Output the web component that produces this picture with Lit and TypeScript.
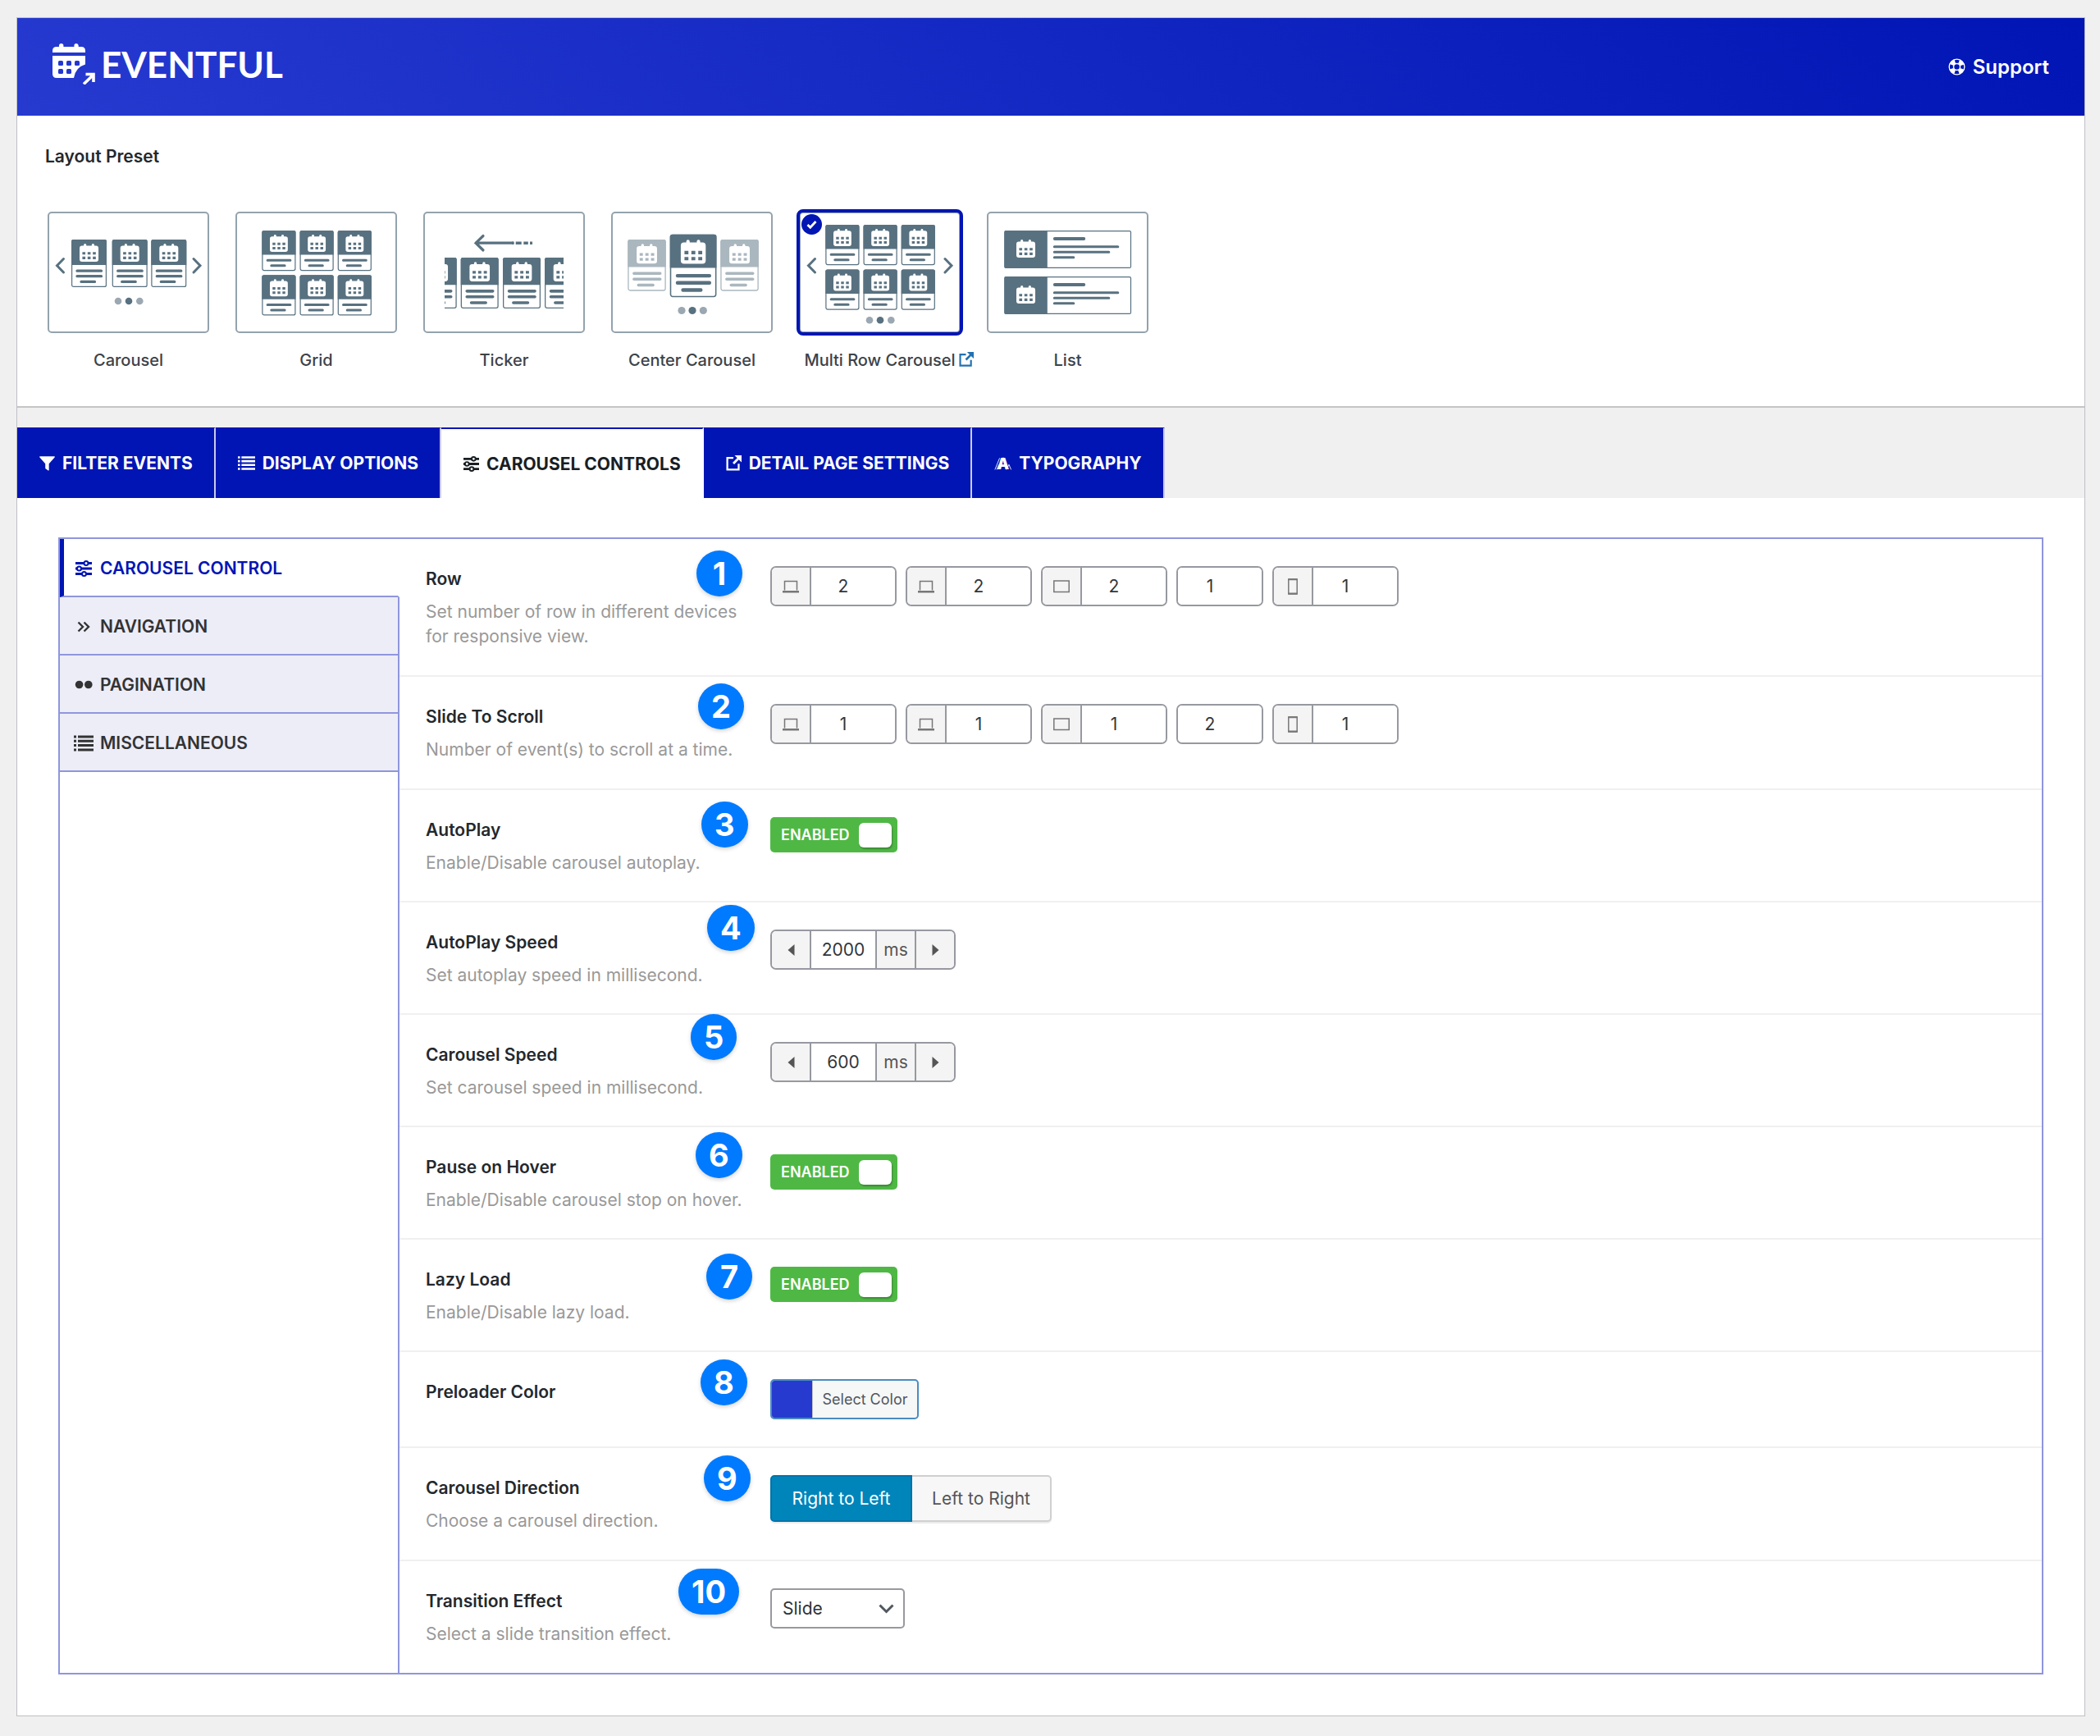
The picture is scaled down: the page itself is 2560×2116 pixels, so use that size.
import { LitElement, html, svg, css, nothing, TemplateResult, SVGTemplateResult } from "lit";
import { customElement, state } from "lit/decorators.js";
import { classMap } from "lit/directives/class-map.js";

/* ---------- line icons ---------- */

const sliders = html`<svg class="icon" viewBox="0 0 20 20" aria-hidden="true">
  <g fill="none" stroke="currentColor" stroke-width="2">
    <path d="M0 3.500h10.500M15.500 3.500H20M0 10h2M7 10h13M0 16.500h8M13 16.500h7" stroke-width="3" />
    <circle cx="13" cy="3.500" r="2.500" /><circle cx="4.500" cy="10" r="2.500" /><circle cx="10.500" cy="16.500" r="2.500" />
  </g></svg>`;
const funnel = html`<svg class="icon" viewBox="0 0 20 20" aria-hidden="true"><path fill="currentColor" d="M.6 1.200h18.800q.8.600.2 1.400L12.300 10.800V19q-.2.800-1 .5L8 17.200q-.4-.4-.4-.9V10.800L.4 2.600Q-.2 1.800.6 1.200z" /></svg>`;
const list = html`<svg class="icon list" viewBox="0 0 24 20" aria-hidden="true"><path stroke="currentColor" stroke-width="3" d="M0 2h3M5 2h19M0 7.300h3M5 7.300h19M0 12.600h3M5 12.600h19M0 18h3M5 18h19" /></svg>`;
const external = html`<svg class="icon" viewBox="0 0 20 20" aria-hidden="true">
  <path fill="none" stroke="currentColor" stroke-width="2.400" d="M9.500 3.400H1.700v15h14.600v-7.600" />
  <path fill="none" stroke="currentColor" stroke-width="3" d="M9.500 10.500l7-7" /><path fill="currentColor" d="M11 0h9v9l-3-3-3-3z" /></svg>`;
const typo = html`<svg class="icon list" viewBox="0 0 24 20" aria-hidden="true">
  <text x="4" y="18" font-family="Inter, sans-serif" font-weight="900" font-size="21" fill="currentColor">A</text>
  <path fill="none" stroke="currentColor" stroke-width="1" d="M1 19L7.500 3M3.500 19l3-7M17 19l3.500-7 3 7M12.500 2L19 18" /></svg>`;
const angles = html`<svg class="icon" viewBox="0 0 20 20" aria-hidden="true"><path fill="none" stroke="currentColor" stroke-width="2.400" d="M3.500 4.500L9 10l-5.500 5.500M10.500 4.500L16 10l-5.500 5.500" /></svg>`;
const dots = html`<svg class="icon" viewBox="0 0 20 20" aria-hidden="true"><circle cx="4.600" cy="9.500" r="4.800" fill="currentColor" /><circle cx="15.800" cy="9.500" r="4.800" fill="currentColor" /></svg>`;
const lifebuoy = html`<svg class="buoy" viewBox="0 0 22 22" aria-hidden="true">
  <g fill="none" stroke="currentColor"><circle cx="11" cy="11" r="9.800" stroke-width="1.400" /><circle cx="11" cy="11" r="4.200" stroke-width="1.600" />
  <circle cx="11" cy="11" r="7.200" stroke-width="5.400" stroke-dasharray="6.200 5.110" stroke-dashoffset="-2.550" /></g></svg>`;
const brand = html`<svg class="mark" viewBox="0 0 52 50" aria-hidden="true">
  <path fill="#fff" d="M0 11V9q0-5 5-5h3V2.500q0-2.500 2.700-2.500t2.700 2.500V4h13V2.500Q26.400 0 29 0t2.700 2.500V4H35q5 0 5 5v2zM0 15h40v10.500Q28 29 26 42H5q-5 0-5-5z" />
  <g fill="#2437d0"><rect x="7" y="21" width="6" height="6" rx="1.500" /><rect x="17" y="21" width="6" height="6" rx="1.500" /><rect x="27" y="21" width="6" height="6" rx="1.500" />
  <rect x="7" y="31" width="6" height="6" rx="1.500" /><rect x="17" y="31" width="6" height="6" rx="1.500" /></g>
  <path fill="none" stroke="#fff" stroke-width="3.600" d="M38 49.500L50 38M40.500 37.500H50V47" /></svg>`;
const laptop = html`<svg class="device" viewBox="0 0 20 20" aria-hidden="true"><path fill="none" stroke="currentColor" stroke-width="1.500" d="M2.500 14.500V3.500h15v11" /><path stroke="currentColor" stroke-width="2.400" d="M0 16.300h20" /></svg>`;
const tablet = html`<svg class="device" viewBox="0 0 20 20" aria-hidden="true"><path fill="none" stroke="currentColor" stroke-width="1.500" d="M.8 3h18.400v13.500H.8z" /></svg>`;
const phone = html`<svg class="device" viewBox="0 0 20 20" aria-hidden="true"><path fill="none" stroke="currentColor" stroke-width="1.500" d="M4.800 1h10.400v18H4.800z" /><path stroke="currentColor" stroke-width="2" d="M4.500 1.300h11M4.500 18.600h11" /></svg>`;

/* ---------- preset artwork ---------- */

const calendar = (x: number, y: number, s: number) => svg`<g transform="translate(${x} ${y}) scale(${s})">
  <path fill="#fff" d="M3 2.500h2.200V1.500a1.600 1.600 0 0 1 3.200 0v1h6.700V1.500a1.600 1.600 0 0 1 3.200 0v1h2.200q3 0 3 3v14q0 3-3 3H3q-3 0-3-3v-14q0-3 3-3z" />
  <path stroke="#587180" stroke-width="3.200" d="M3.500 12h3.700M10 12h3.700M16.500 12h3.700M3.500 17.700h3.700M10 17.700h3.700M16.500 17.700h3.700" /></g>`;

/* event tile with three text lines, 43 x 58 */
const tall = (x: number, y: number, s = 1) => svg`<g transform="translate(${x} ${y}) scale(${s})">
  <rect x=".6" y=".6" width="41.800" height="56.800" rx="2" fill="#fff" stroke="#587180" stroke-width="1.200" />
  <path fill="#587180" d="M0 31V2q0-2 2-2h39q2 0 2 2v29z" />${calendar(10, 5, 0.98)}
  <path stroke="#587180" stroke-width="3.300" stroke-linecap="round" d="M7 38.200h29.500M7 44.700h29.500M12 51.400h16.500" /></g>`;

/* event tile with two text lines, 41 x 49 */
const short = (x: number, y: number) => svg`<g transform="translate(${x} ${y})">
  <rect x=".6" y=".6" width="40" height="48" rx="2" fill="#fff" stroke="#587180" stroke-width="1.200" />
  <path fill="#587180" d="M0 29.500V2q0-2 2-2h37.200q2 0 2 2v27.500z" />${calendar(9.7, 5, 0.93)}
  <path stroke="#587180" stroke-width="3" stroke-linecap="round" d="M6.800 36.200h27.800M11.500 42.700h16.300" /></g>`;

const pager = (y: number, r = 4.3) => svg`<circle cx="86" cy=${y} r=${r} fill="#9ba8b2" /><circle cx="99" cy=${y} r=${r} fill="#587180" /><circle cx="112.300" cy=${y} r=${r} fill="#9ba8b2" />`;
const arrows = svg`<path fill="none" stroke="#587180" stroke-width="3" stroke-linecap="round" d="M19.500 57.500L11.500 65.700l8 8.300M178 57.500l8 8.200-8 8.300" />`;
const listRow = (y: number) => svg`<g transform="translate(21.300 ${y})">
  <rect x=".6" y=".6" width="153.600" height="44.800" rx="1.500" fill="#fff" stroke="#587180" stroke-width="1.200" />
  <path fill="#587180" d="M0 2q0-2 2-2h50.500v46H2q-2 0-2-2z" />${calendar(14.7, 11, 0.98)}
  <g stroke="#587180" stroke-linecap="round"><path stroke-width="3.800" d="M61.500 10H97" /><path stroke-width="3" d="M61 19.700h77.500M61 26.300h66.500M61 32.700h23.500" /></g></g>`;

interface Preset { id: string; name: string; art: SVGTemplateResult; link?: boolean }
const presets: Preset[] = [
  { id: "carousel", name: "Carousel", art: svg`${tall(29, 34)}${tall(78.7, 34)}${tall(126.3, 34)}${pager(109)}${arrows}` },
  { id: "grid", name: "Grid", art: svg`${[23, 77.3].map((y) => [32.3, 78.5, 124.7].map((x) => short(x, y)))}` },
  { id: "ticker", name: "Ticker", art: svg`<svg x="26" y="20" width="145" height="110" viewBox="26 20 145 110">${[-5.3, 45.7, 97, 148].map((x) => tall(x, 56, 1.07))}</svg>
    <path fill="none" stroke="#587180" stroke-width="3.200" stroke-linecap="round" d="M73 29.500L64 38.200l9 8.800M64 38.200h45" /><path stroke="#587180" stroke-width="3.400" d="M108 38.200h2.500M112.700 38.200h7M122.300 38.200h5.500M130 38.200h3" />` },
  { id: "center", name: "Center Carousel", art: svg`<g opacity=".5">${tall(20.3, 34, 1.08)}${tall(133.3, 34, 1.08)}</g>${tall(71.7, 27.7, 1.32)}${pager(120.5, 4.6)}` },
  { id: "multi", name: "Multi Row Carousel", link: true, art: svg`${[16, 70.5].map((y) => [32.3, 78.5, 124.7].map((x) => short(x, y)))}${pager(132.3)}${arrows}` },
  { id: "list", name: "List", art: svg`${listRow(23)}${listRow(79)}` },
];

const tabs = [
  { name: "FILTER EVENTS", icon: funnel },
  { name: "DISPLAY OPTIONS", icon: list },
  { name: "CAROUSEL CONTROLS", icon: sliders },
  { name: "DETAIL PAGE SETTINGS", icon: external },
  { name: "TYPOGRAPHY", icon: typo },
];
const sections = [
  { name: "CAROUSEL CONTROL", icon: sliders },
  { name: "NAVIGATION", icon: angles },
  { name: "PAGINATION", icon: dots },
  { name: "MISCELLANEOUS", icon: list },
];
const devices = [
  { name: "Large desktop", icon: laptop },
  { name: "Desktop", icon: laptop },
  { name: "Tablet", icon: tablet },
  { name: "Small tablet", icon: null },
  { name: "Mobile", icon: phone },
];

interface Field {
  id: string; title: string; note?: string;
  kind: "devices" | "toggle" | "speed" | "color" | "direction" | "select";
  values?: number[];
  /* where the numbered marker is pinned over the row */
  pin: [number, number];
}
const fields: Field[] = [
  { id: "row", title: "Row", note: "Set number of row in different devices for responsive view.", kind: "devices", values: [2, 2, 2, 1, 1], pin: [362, 14] },
  { id: "scroll", title: "Slide To Scroll", note: "Number of event(s) to scroll at a time.", kind: "devices", values: [1, 1, 1, 2, 1], pin: [364, 8] },
  { id: "autoplay", title: "AutoPlay", note: "Enable/Disable carousel autoplay.", kind: "toggle", pin: [368, 14] },
  { id: "autoplay-speed", title: "AutoPlay Speed", note: "Set autoplay speed in millisecond.", kind: "speed", values: [2000], pin: [375, 3] },
  { id: "speed", title: "Carousel Speed", note: "Set carousel speed in millisecond.", kind: "speed", values: [600], pin: [355, -1] },
  { id: "pause", title: "Pause on Hover", note: "Enable/Disable carousel stop on hover.", kind: "toggle", pin: [361, 6] },
  { id: "lazy", title: "Lazy Load", note: "Enable/Disable lazy load.", kind: "toggle", pin: [374, 17] },
  { id: "color", title: "Preloader Color", kind: "color", pin: [367, 9] },
  { id: "direction", title: "Carousel Direction", note: "Choose a carousel direction.", kind: "direction", pin: [371, 9] },
  { id: "effect", title: "Transition Effect", note: "Select a slide transition effect.", kind: "select", pin: [340, 9] },
];

@customElement("app-root")
export class AppRoot extends LitElement {
  @state() private preset = "multi";
  @state() private tab = 2;
  @state() private section = 0;
  @state() private direction = 0;

  static styles = css`
    :host { display: block; box-sizing: border-box; min-height: 100vh; padding: 21px 18px 24px 20px; background: #f0f0f0; font-family: Inter, "Liberation Sans", sans-serif; font-size: 21px; color: #23282d; }
    *, *::before, *::after { box-sizing: border-box; }
    button, input, select { font: inherit; color: inherit; margin: 0; }
    button { cursor: pointer; }
    svg { display: block; flex: none; }
    .hidden { position: absolute; opacity: 0; width: 1px; height: 1px; margin: 0; }

    .page { border: 1px solid #bfc0c6; background: #fff; }
    .header { display: flex; justify-content: space-between; align-items: center; height: 119px; padding: 0 43px; background: linear-gradient(-135deg, #0015b4, #263ad0); color: #fff; }
    .brand { display: flex; align-items: center; gap: 7px; padding-bottom: 8px; font: 700 44px/56px Lato, sans-serif; }
    .mark { width: 52px; height: 50px; }
    .support { display: flex; align-items: center; gap: 9px; color: #fff; text-decoration: none; font-size: 24px; font-weight: 600; line-height: 32px; }
    .buoy { width: 21px; height: 21px; }

    .layout { padding: 34px 34px 40px; border-bottom: 2px solid #c5c5c5; }
    .layout-title { margin: 0; font-size: 21px; font-weight: 600; line-height: 32px; }
    .presets { display: flex; gap: 32px; margin: 0; padding: 51px 3px 0; border: 0; }
    .preset { position: relative; width: 197px; cursor: pointer; }
    .card { position: relative; display: block; height: 148px; border: 2px solid #94a3ad; border-radius: 5px; }
    .card .art { width: 198px; height: 148px; margin: -2px; }
    .chosen .card { outline: 4px solid #0015b4; outline-offset: -1px; }
    .check { position: absolute; left: 1px; top: 1px; width: 25px; height: 25px; }
    .name { display: block; margin-top: 17px; text-align: center; font-size: 20px; font-weight: 500; line-height: 32px; color: #3c434a; white-space: nowrap; }
    .more { position: absolute; left: 195px; top: 171px; color: #2271b1; }
    .more .icon { width: 18px; height: 18px; }

    .tabs { display: flex; padding-top: 24px; background: #f0f0f0; }
    .tab { display: flex; align-items: center; gap: 9px; height: 86px; padding: 0 26px 0 27px; border: 0; border-right: 2px solid #c9cbe6; border-top: 1px solid #0015b4; background: #0015b4; color: #fff; font-weight: 700; white-space: nowrap; }
    .tab.current { border-top: 2px solid #0015b4; border-right-color: #fff; background: #fff; color: #191e23; }
    .icon { width: 20px; height: 20px; overflow: visible; }
    .tab .icon { width: 19px; height: 19px; }
    .tab .icon.list { width: 21px; }
    .icon.list { width: 24px; }

    .body { padding: 48px 50px 50px; }
    .frame { display: grid; grid-template-columns: 414px 1fr; border: 2px solid #8f96dd; }
    .side { border-right: 2px solid #8f96dd; }
    .sections { display: grid; margin-right: -2px; }
    .section { display: grid; grid-template-columns: 24px 1fr; justify-items: center; align-items: center; gap: 8px; height: 71px; padding: 2px 17px 0; border: 0; border-bottom: 2px solid #8f96dd; border-right: 2px solid #8f96dd; background: #ededf8; color: #333; font-weight: 600; }
    .section span { justify-self: start; }
    .section.current { border-right-color: #fff; padding-left: 12px; border-left: 5px solid #0015b4; background: #fff; color: #0015b4; }

    .field { position: relative; display: grid; grid-template-columns: 388px 1fr; column-gap: 32px; padding: 33px 32px 32px; border-bottom: 2px solid #f0f0f0; }
    .field:last-child { border-bottom: 0; }
    .field.toggle, .field.speed { padding-bottom: 31px; }
    .field.color { padding-bottom: 33px; }
    .title { margin: 0; font-size: 21px; font-weight: 600; line-height: 32px; }
    .note { margin: 9px 0 0; font-size: 21px; line-height: 30px; color: #999; }
    .pin { position: absolute; min-width: 56px; height: 56px; padding: 0 16px; border-radius: 28px; background: #007aff; color: #fff; font-size: 38px; font-weight: 700; line-height: 56px; text-align: center; box-shadow: 0 2px 5px rgba(0, 0, 0, 0.18); }

    .groups { display: flex; gap: 11px; }
    .group { display: flex; height: 49px; border: 2px solid #9799a0; border-radius: 7px; overflow: hidden; background: #fff; }
    .unit { display: grid; place-items: center; width: 48px; border: 0; padding: 0; background: #f4f4f4; color: #555; }
    .group .unit:first-child { border-right: 2px solid #9799a0; }
    .device { width: 20px; height: 20px; color: #777; }
    .number { width: 102px; border: 0; padding: 0 24px 0 0; background: #fff; text-align: center; font-size: 21px; color: #32373c; outline: 0; appearance: textfield; }
    .number::-webkit-inner-spin-button { appearance: none; }
    .paced .number { width: 78px; padding: 0; }
    .paced .unit ~ .unit { border-left: 2px solid #9799a0; }
    .tri { width: 9px; height: 14px; }

    .switch { display: flex; align-items: center; justify-content: space-between; width: 155px; height: 43px; padding: 0 7px 0 13px; border-radius: 5px; background: #4fb845; color: #fff; font-size: 18px; font-weight: 600; cursor: pointer; }
    .knob { width: 40px; height: 30px; border-radius: 6px; background: #fff; box-shadow: 1px 2px 2px rgba(0, 0, 0, 0.25); }
    .picker { display: flex; width: 181px; height: 49px; padding: 0; border: 2px solid #4a8cc0; border-radius: 5px; overflow: hidden; background: #f6f7f7; color: #50575e; font-size: 18px; line-height: 45px; }
    .swatch { width: 50px; background: #263ad0; border-right: 1px solid #c3c4c7; }
    .picker-text { flex: 1; text-align: center; }
    .choices { display: flex; }
    .choice { height: 57px; padding: 0; width: 173px; border: 2px solid #d0d0d0; background: #f7f7f7; color: #555; font-size: 21px; box-shadow: 0 2px 1px rgba(0, 0, 0, 0.08); }
    .choice:first-child { border-radius: 5px 0 0 5px; }
    .choice:last-child { border-radius: 0 5px 5px 0; border-left: 0; width: 170px; }
    .choice.on { border-color: #0073aa; background: #0085ba; color: #fff; }
    .select { position: relative; width: 164px; }
    .select select { display: block; width: 100%; height: 49px; padding: 0 40px 0 13px; border: 2px solid #9799a0; border-radius: 5px; background: #fff; color: #2c3338; appearance: none; font-size: 21px; }
    .select svg { position: absolute; right: 13px; top: 19px; width: 19px; height: 12px; pointer-events: none; }
  `;

  private control(f: Field): TemplateResult {
    switch (f.kind) {
      case "devices":
        return html`<div class="groups">${devices.map((d, i) => html`<div class="group">
          ${d.icon ? html`<span class="unit">${d.icon}</span>` : nothing}
          <input class="number" type="number" aria-label="${f.title}, ${d.name}" .value=${String(f.values![i])} /></div>`)}</div>`;
      case "toggle":
        return html`<label class="switch"><input class="hidden" type="checkbox" checked aria-label=${f.title} />ENABLED<span class="knob"></span></label>`;
      case "speed":
        return html`<div class="groups paced"><div class="group">
          <button class="unit" aria-label="Decrease ${f.title}"><svg class="tri" viewBox="0 0 9 14"><path fill="currentColor" d="M8.500 0v14L.5 7z" /></svg></button>
          <input class="number" type="number" aria-label=${f.title} .value=${String(f.values![0])} />
          <span class="unit">ms</span>
          <button class="unit" aria-label="Increase ${f.title}"><svg class="tri" viewBox="0 0 9 14"><path fill="currentColor" d="M.5 0v14l8-7z" /></svg></button>
        </div></div>`;
      case "color":
        return html`<button class="picker"><span class="swatch"></span><span class="picker-text">Select Color</span></button>`;
      case "direction":
        return html`<div class="choices">${["Right to Left", "Left to Right"].map((t, i) => html`<button class=${classMap({ choice: true, on: this.direction === i })}
          aria-pressed=${this.direction === i} @click=${() => (this.direction = i)}>${t}</button>`)}</div>`;
      case "select":
        return html`<div class="select"><select aria-label=${f.title}><option>Slide</option><option>Fade</option></select>
          <svg viewBox="0 0 19 12" aria-hidden="true"><path fill="none" stroke="#50575e" stroke-width="3" d="M1.500 1.500l8 8 8-8" /></svg></div>`;
    }
  }

  render() {
    return html`<main class="page">
      <header class="header">
        <div class="brand">${brand}<span>EVENTFUL</span></div>
        <a class="support" href="#support">${lifebuoy}Support</a>
      </header>

      <section class="layout">
        <h2 class="layout-title">Layout Preset</h2>
        <div class="presets" role="radiogroup" aria-label="Layout Preset">
          ${presets.map((p) => html`<div class=${classMap({ preset: true, chosen: this.preset === p.id })}>
            <label><input class="hidden" type="radio" name="preset" .checked=${this.preset === p.id} @change=${() => (this.preset = p.id)} />
              <span class="card"><svg class="art" viewBox="0 0 198 148" aria-hidden="true">${p.art}</svg>
                ${this.preset === p.id ? html`<svg class="check" viewBox="0 0 25 25" aria-hidden="true"><circle cx="12.500" cy="12.500" r="12.500" fill="#0015b4" /><path fill="none" stroke="#fff" stroke-width="2.800" d="M7.500 13l3.300 3.300L17.500 9" /></svg>` : nothing}
              </span><span class="name">${p.name}</span></label>
            ${p.link ? html`<a class="more" href="#demo" aria-label="${p.name} demo">${external}</a>` : nothing}
          </div>`)}
        </div>
      </section>

      <nav class="tabs">
        ${tabs.map((t, i) => html`<button class=${classMap({ tab: true, current: this.tab === i })} @click=${() => (this.tab = i)}>${t.icon}<span>${t.name}</span></button>`)}
      </nav>

      <div class="body"><div class="frame">
        <div class="side"><nav class="sections">
          ${sections.map((s, i) => html`<button class=${classMap({ section: true, current: this.section === i })} @click=${() => (this.section = i)}>${s.icon}<span>${s.name}</span></button>`)}
        </nav></div>
        <div class="fields">
          ${fields.map((f, i) => html`<section class="field ${f.kind}">
            <div><h3 class="title">${f.title}</h3>${f.note ? html`<p class="note">${f.note}</p>` : nothing}</div>
            <div>${this.control(f)}</div>
            <span class="pin" style="left:${f.pin[0]}px;top:${f.pin[1]}px">${i + 1}</span>
          </section>`)}
        </div>
      </div></div>
    </main>`;
  }
}
